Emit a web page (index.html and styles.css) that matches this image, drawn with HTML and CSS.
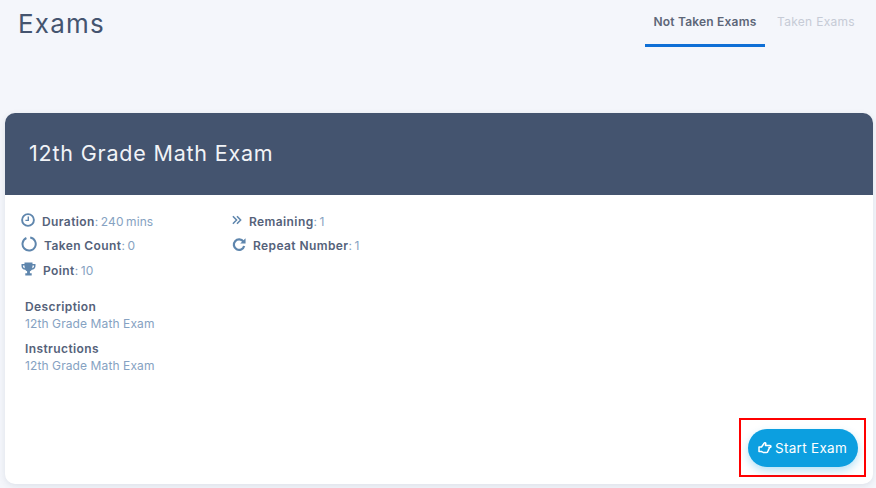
FILE: index.html
```html
<!DOCTYPE html>
<html lang="en">
<head>
    <meta charset="UTF-8">
    <meta name="viewport" content="width=device-width, initial-scale=1.0">
    <title>Exams</title>
    <link rel="stylesheet" href="styles.css">
</head>
<body>
    <div class="top">
        <h1>Exams</h1>
        <div class="tabs">
            <a class="tab active">Not Taken Exams</a>
            <a class="tab">Taken Exams</a>
        </div>
    </div>

    <div class="card">
        <div class="card-head">12th Grade Math Exam</div>
        <div class="card-body">
            <div class="stats">
                <div class="stat-col first">
                    <div class="stat">
                        <svg class="icon" width="14" height="14" viewBox="0 0 14 14"><circle cx="7" cy="7" r="5.9" fill="none" stroke="#5f86ad" stroke-width="1.9"/><path d="M7.3 3.4v4H4.4" fill="none" stroke="#5f86ad" stroke-width="1.4"/></svg>
                        <span><b>Duration</b>: 240 mins</span>
                    </div>
                    <div class="stat">
                        <svg class="icon" width="16" height="16" viewBox="0 0 16 16"><path d="M9.2 1.5A6.6 6.6 0 1 1 5.4 2" fill="none" stroke="#5f86ad" stroke-width="2"/></svg>
                        <span><b>Taken Count</b>: 0</span>
                    </div>
                    <div class="stat">
                        <svg class="icon" width="15" height="14" viewBox="0 0 15 14"><path d="M3.5 0.5h8v1.5h3v2.2c0 1.9-1.7 3.3-3.7 3.5-.5.8-1.2 1.3-1.9 1.6v2h1.8v2.2H4.3v-2.2h1.8v-2C5.400 9 4.700 8.500 4.200 7.700 2.200 7.500 .5 6.100 .5 4.200V2h3zM2 3.400v.8c0 1 .8 1.800 1.800 2.100-.2-.9-.3-1.900-.3-2.900zm11 0h-1.500c0 1-.1 2-.3 2.900 1-.3 1.800-1.100 1.800-2.100z" fill="#5f86ad"/></svg>
                        <span><b>Point</b>: 10</span>
                    </div>
                </div>
                <div class="stat-col">
                    <div class="stat">
                        <svg class="icon" width="10" height="10" viewBox="0 0 11 10"><path d="M1 .8l4 4.200-4 4.200M5.500 .8l4 4.200-4 4.200" fill="none" stroke="#5f86ad" stroke-width="1.700"/></svg>
                        <span><b>Remaining</b>: 1</span>
                    </div>
                    <div class="stat">
                        <svg class="icon" width="14" height="15" viewBox="0 0 15 15"><path d="M12.200 4.500A5.600 5.600 0 1 0 13 9" fill="none" stroke="#5f86ad" stroke-width="2.400"/><path d="M14.500 .8v5.700H8.800z" fill="#5f86ad"/></svg>
                        <span><b>Repeat Number</b>: 1</span>
                    </div>
                </div>
            </div>

            <div class="info">
                <h4>Description</h4>
                <p>12th Grade Math Exam</p>
            </div>
            <div class="info">
                <h4>Instructions</h4>
                <p>12th Grade Math Exam</p>
            </div>

            <div class="actions">
                <div class="highlight">
                    <button class="start-btn">
                        <svg width="14" height="13" viewBox="0 0 14 13"><path d="M1 6h2.500L6 2.500c.3-1.200 2-.8 1.800.5l-.3 1.500H12c1.300 0 1.300 2 0 2h-1c.5 1 0 1.800-.5 2 .2 1-.2 1.500-.7 1.700 0 1-.5 1.300-1.300 1.300H6c-1 0-1.500-.5-2.500-1H1z" fill="none" stroke="#fff" stroke-width="1.500" stroke-linejoin="round"/></svg>
                        <span>Start Exam</span>
                    </button>
                </div>
            </div>
        </div>
    </div>
</body>
</html>
```

FILE: styles.css
```css
body {
    font-family: 'Inter', 'Open Sans', Arial, sans-serif;
    margin: 0;
    padding: 0 3px 4px 5px;
    background: #f4f6fb;
    color: #44546f;
    overflow: hidden;
}
.top {
    display: flex;
    justify-content: space-between;
    align-items: flex-start;
    height: 113px;
}
h1 {
    margin: 8px 0 0 13px;
    font-size: 26px;
    line-height: 32px;
    font-weight: 400;
    letter-spacing: 1.2px;
    color: #44546f;
}
.tabs {
    display: flex;
    margin-right: 18px;
}
.tab {
    height: 44px;
    line-height: 44px;
    font-size: 12px;
    letter-spacing: 0.3px;
    padding: 0 0 0 12px;
    color: #c6cbd6;
}
.tab.active {
    width: 120px;
    box-sizing: border-box;
    padding: 0;
    text-align: center;
    font-weight: 600;
    letter-spacing: 0.2px;
    color: #5d6678;
    border-bottom: 3px solid #0f6fd6;
    height: 47px;
}
.card {
    display: flex;
    flex-direction: column;
    background: #fff;
    border-radius: 10px;
    box-shadow: 0 2px 6px rgba(68,84,111,0.12);
    height: 371px;
}
.card-head {
    background: #44546f;
    color: #f1f3f7;
    height: 82px;
    line-height: 80px;
    padding-left: 24px;
    font-size: 21.5px;
    letter-spacing: 0.8px;
    border-radius: 10px 10px 0 0;
}
.card-body {
    flex: 1;
    display: flex;
    flex-direction: column;
    padding: 14px 16px 7px;
    font-size: 12px;
    letter-spacing: 0.1px;
    color: #86a2c2;
}
.stats {
    display: flex;
}
.stat-col.first {
    width: 211px;
}
.stat {
    display: flex;
    align-items: center;
    height: 24.5px;
    white-space: pre;
    word-spacing: -1px;
}
.stat b {
    font-weight: 600;
    letter-spacing: 0.4px;
    word-spacing: 0;
    color: #55627a;
}
.icon {
    margin: 0 7px 3px 0;
}
.info {
    padding-left: 4px;
    line-height: 17px;
}
.stats + .info {
    margin-top: 15.5px;
}
.info + .info {
    margin-top: 8px;
}
.info h4 {
    margin: 0;
    font-size: 12px;
    font-weight: 600;
    letter-spacing: 0.4px;
    color: #55627a;
}
.info p {
    margin: 0;
}
.actions {
    margin-top: auto;
    margin-right: -9px;
    display: flex;
    justify-content: flex-end;
}
.highlight {
    box-sizing: border-box;
    border: 2px solid #ff0000;
    width: 127px;
    height: 59px;
    display: flex;
    align-items: center;
    justify-content: center;
}
.start-btn {
    display: flex;
    align-items: center;
    justify-content: center;
    gap: 3px;
    width: 110px;
    height: 38px;
    flex: none;
    border: none;
    border-radius: 19px;
    background: #0c9fe0;
    color: #fff;
    font-family: inherit;
    font-size: 13.5px;
    letter-spacing: 0.3px;
    box-shadow: 0 4px 8px rgba(12,159,224,0.3);
}
```
